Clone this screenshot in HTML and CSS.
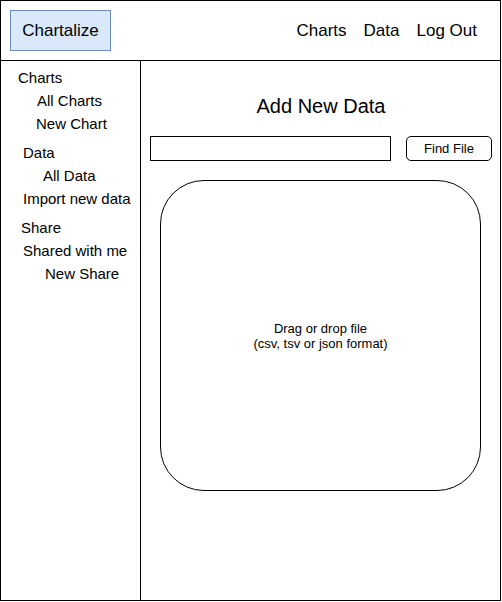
FILE: index.html
```html
<!DOCTYPE html>
<html lang="en">
<head>
  <meta charset="UTF-8" />
  <meta name="viewport" content="width=device-width, initial-scale=1.0" />
  <title>Chartalize - Add New Data</title>
  <link rel="stylesheet" href="styles.css">
</head>
<body>
  <div class="frame">
    <header class="top-bar">
      <div class="brand">Chartalize</div>
      <nav class="top-nav">
        <a href="#">Charts</a>
        <a href="#">Data</a>
        <a href="#">Log Out</a>
      </nav>
    </header>

    <aside class="sidebar">
      <div class="group">
        <a class="in-17" href="#">Charts</a>
        <a class="in-36" href="#">All Charts</a>
        <a class="in-35" href="#">New Chart</a>
      </div>
      <div class="group">
        <a class="in-22" href="#">Data</a>
        <a class="in-43" href="#">All Data</a>
        <a class="in-22" href="#">Import new data</a>
      </div>
      <div class="group">
        <a class="in-20" href="#">Share</a>
        <a class="in-22" href="#">Shared with me</a>
        <a class="in-44" href="#">New Share</a>
      </div>
    </aside>

    <main class="content">
      <h1>Add New Data</h1>
      <div class="file-row">
        <input type="text" class="file-path">
        <button class="find-btn">Find File</button>
      </div>
      <div class="drop-zone">
        <p>Drag or drop file<br>(csv, tsv or json format)</p>
      </div>
    </main>
  </div>
</body>
</html>
```

FILE: styles.css
```css
* {
  margin: 0;
  padding: 0;
  box-sizing: border-box;
}
body {
  font-family: 'Liberation Sans', Arial, sans-serif;
  color: #000;
  background: #fff;
}
a {
  color: #000;
  text-decoration: none;
}
.frame {
  width: 501px;
  height: 601px;
  border: 1px solid #000;
  display: grid;
  grid-template-columns: 140px 1fr;
  grid-template-rows: 60px 1fr;
}
.top-bar {
  grid-column: 1 / 3;
  border-bottom: 1px solid #000;
  display: flex;
  justify-content: space-between;
  align-items: flex-start;
  padding: 9px 23px 0 9px;
}
.brand {
  width: 101px;
  height: 41px;
  background: #dae8fc;
  border: 1px solid #6c8ebf;
  font-size: 17px;
  display: flex;
  align-items: center;
  justify-content: center;
}
.top-nav {
  display: flex;
  gap: 17px;
  font-size: 17px;
  height: 41px;
  align-items: center;
}
.sidebar {
  border-right: 1px solid #000;
  padding-top: 5px;
  font-size: 15px;
  display: flex;
  flex-direction: column;
  gap: 6px;
}
.group a {
  display: block;
  line-height: 23px;
}
.in-17 { padding-left: 17px; }
.in-20 { padding-left: 20px; }
.in-22 { padding-left: 22px; }
.in-35 { padding-left: 35px; }
.in-36 { padding-left: 36px; }
.in-43 { padding-left: 42px; }
.in-44 { padding-left: 44px; }
.content {
  padding: 33px 8px 0 9px;
}
.content h1 {
  font-size: 20px;
  font-weight: normal;
  line-height: 24px;
  text-align: center;
}
.file-row {
  display: flex;
  gap: 15px;
  margin-top: 18px;
}
.file-path {
  width: 241px;
  height: 25px;
  border: 1px solid #000;
  border-radius: 0;
  outline: none;
}
.find-btn {
  width: 86px;
  height: 25px;
  border: 1px solid #000;
  border-radius: 5px;
  background: #fff;
  font-family: inherit;
  font-size: 13px;
  color: #000;
}
.drop-zone {
  width: 321px;
  height: 311px;
  margin: 19px 0 0 10px;
  border: 1px solid #000;
  border-radius: 44px;
  display: flex;
  align-items: center;
  justify-content: center;
  text-align: center;
  font-size: 13px;
  line-height: 15px;
}
```
